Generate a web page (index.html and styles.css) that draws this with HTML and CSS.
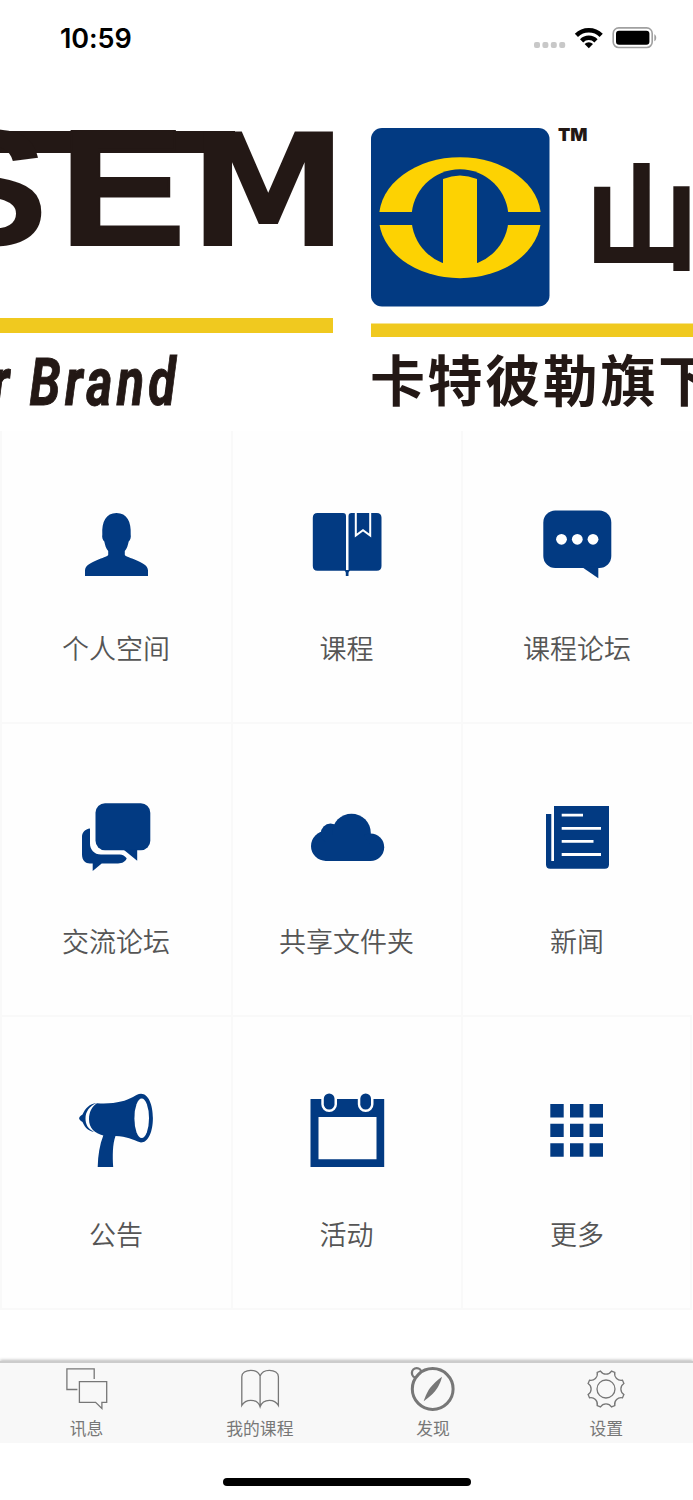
FILE: index.html
```html
<!DOCTYPE html>
<html lang="zh-CN">
<head>
<meta charset="utf-8">
<title>SEM</title>
<link rel="stylesheet" href="styles.css">
</head>
<body>
<header class="status">
  <span class="time">10:59</span>
  <svg class="status-icons" viewBox="530 20 130 36">
    <g fill="#c8c8c8"><rect x="534" y="42" width="6" height="6" rx="2"/><rect x="542.4" y="42" width="6" height="6" rx="2"/><rect x="550.8" y="42" width="6" height="6" rx="2"/><rect x="559.2" y="42" width="6" height="6" rx="2"/></g>
    <g fill="none" stroke="#000" stroke-width="4.500"><path d="M576.4 35.400a17.600 17.600 0 0 1 24.800 0"/><path d="M581.600 40.800a10.200 10.200 0 0 1 14.400 0"/></g>
    <path d="M584.600 43.900a6 6 0 0 1 8.400 0L588.800 48.200z"/>
    <rect x="613.200" y="27.900" width="39" height="19.600" rx="5.500" fill="none" stroke="#a0a0a0" stroke-width="1.600"/>
    <rect x="616" y="30.700" width="33.400" height="14" rx="3"/>
    <path d="M654.300 34.200c2.600 1 2.600 6 0 7z" fill="#a0a0a0"/>
  </svg>
</header>

<svg class="banner" viewBox="0 96 693 335">
  <g class="wordmark">
    <rect x="0" y="131" width="235" height="22"/>
    <text transform="translate(-72 245) scale(1.080 1)">S</text>
    <text class="mid" transform="translate(59 245.200) scale(1.140 .985)">E</text>
    <text class="wide" transform="translate(189 245.700) scale(1.015 1)">M</text>
  </g>
  <rect class="rule" x="0" y="318" width="333" height="15"/>
  <text class="slogan" transform="translate(-8 405) scale(.73 1)">r</text>
  <text class="slogan" transform="translate(29.500 405) scale(.75 1)" textLength="195">Brand</text>
  <rect x="371" y="128" width="178.500" height="178.500" rx="11" fill="#023a82"/>
  <ellipse cx="460" cy="217.700" rx="81" ry="60.500" fill="#fdd202"/>
  <circle cx="460" cy="217.700" r="48.500" fill="#023a82"/>
  <rect x="375" y="212" width="170" height="13" fill="#023a82"/>
  <path d="M443 179q17-7 34 0v88h-34z" fill="#fdd202"/>
  <text class="tm" x="558" y="141">TM</text>
  <text class="mountain" transform="translate(584.500 258.500) scale(.985 .97)">山</text>
  <rect class="rule" x="371" y="323.500" width="322" height="13.500"/>
  <text class="brand-cn" x="370" y="401">卡特彼勒旗下</text>
</svg>

<main class="menu">
  <a class="cell"><svg class="icon" viewBox="71 503 90 90"><path d="M85 576v-5.500c0-5 6-8 14-11.200 5-2 9.200-3 9.200-4.500V551c-2.200-2.500-3.200-6-3.900-9.500-1.700-1.500-2.500-4.500-2-7-.7-13 3.700-21.500 14.200-21.500s14.900 8.500 14.200 21.500c.5 2.500-.3 5.500-2 7-.7 3.500-1.700 7-3.900 9.500v3.800c0 1.500 4.200 2.500 9.200 4.500 8 3.200 14 6.200 14 11.200v5.500z"/></svg><span class="label">个人空间</span></a>
  <a class="cell"><svg class="icon" viewBox="301.500 503 90 90"><path d="M317 513h25.500q3 0 3 3v54.700H317q-4.700 0-4.700-4.700v-48.300q0-4.700 4.700-4.700zM351 513h25.300q4.700 0 4.700 4.700V566q0 4.700-4.700 4.700H348V516q0-3 3-3zM342 570h10q-4 .5-4 3v3h-2.700v-3q0-2.500-3.300-3z"/><path class="cut" stroke-width="2" d="M355.300 512v23.500l7.200-5.200 7.200 5.200V512"/></svg><span class="label">课程</span></a>
  <a class="cell"><svg class="icon" viewBox="532 503 90 90"><rect x="543.300" y="510.500" width="68" height="57.500" rx="12"/><path d="M583 567.800l15.300 10.500V566z"/><g fill="#fff"><circle cx="561.500" cy="539.300" r="5.400"/><circle cx="577.300" cy="539.300" r="5.400"/><circle cx="593" cy="539.300" r="5.400"/></g></svg><span class="label">课程论坛</span></a>

  <a class="cell"><svg class="icon" viewBox="71 796 90 90"><rect x="95.500" y="803.300" width="54.800" height="47" rx="9.500"/><path d="M124 850l13.200 10.800V849zM90 828.500c-5 .5-8 4-8 8.500v17.500c0 6 3.500 9 8 9h2.700v7.500l9-7.500H118c4.500 0 7.500-2 8.700-5.200-2-2.500-4-3.800-7-3.800H101c-7 0-11-5-11-11z"/></svg><span class="label">交流论坛</span></a>
  <a class="cell"><svg class="icon" viewBox="301.500 796 90 90"><circle cx="325.500" cy="846" r="15"/><circle cx="330" cy="833.300" r="9.700"/><circle cx="351" cy="833" r="19.300"/><circle cx="370" cy="847.300" r="13.700"/><path d="M325 835h38l7 10v16h-45z"/></svg><span class="label">共享文件夹</span></a>
  <a class="cell"><svg class="icon" viewBox="532 796 90 90"><path d="M554 806h55v58.500q0 4.200-4.200 4.200h-54.600q-4.200 0-4.200-4.200V814h5.300v47h2.700z"/><path class="cut" stroke-width="2.800" d="M561.700 815.200h21.300M561.700 828.300H601M561.700 841.300h31.800M561.700 854.500H601"/></svg><span class="label">新闻</span></a>

  <a class="cell"><svg class="icon" viewBox="71 1089 90 90"><path d="M97 1103.200c18 1 28-2 36-6.200 3-1.700 5-3.300 8-3.300 7.500 0 11.900 11 11.900 24.400S148.500 1142.600 141 1142.600c-9-3-14-6.100-25.500-6.600-3 8-3 20-2.300 31H97.700c.3-12 2-22.500 5.600-31.500-8.500-2.500-14.300-7-14.300-16.300 0-7.200 3-13 8-16zM96.500 1103c-7 1-11 5-14 11.500-4.500 3-4.500 4.500 0 7.500 3 6.500 6 9 11.500 9.800-6.300-3-8.500-7.500-8.500-13.500 0-6.500 4-12.300 11-15.300z"/><ellipse cx="141.700" cy="1118.200" rx="7.300" ry="19.700" fill="#fff"/></svg><span class="label">公告</span></a>
  <a class="cell"><svg class="icon" viewBox="301.500 1089 90 90"><path fill-rule="evenodd" d="M310 1099h73.700v68H310zM318 1117v42.300h58V1117z"/><g stroke="#fff" stroke-width="5" paint-order="stroke"><rect x="323.300" y="1093.500" width="10.700" height="16" rx="5.300"/><rect x="359.800" y="1093.500" width="10.700" height="16" rx="5.300"/></g></svg><span class="label">活动</span></a>
  <a class="cell last"><svg class="icon" viewBox="532 1089 90 90"><path d="M550.300 1104h13.400v13.400h-13.400zM570 1104h13.400v13.400H570zM589.600 1104H603v13.400h-13.400zM550.300 1123.700h13.400v13.400h-13.400zM570 1123.700h13.400v13.400H570zM589.600 1123.700H603v13.400h-13.400zM550.300 1143.300h13.400v13.400h-13.400zM570 1143.300h13.400v13.400H570zM589.600 1143.300H603v13.400h-13.400z"/></svg><span class="label">更多</span></a>
</main>

<nav class="tabs">
  <a class="tab"><svg class="tab-icon" viewBox="62.600 1364 48 48"><path d="M77 1389.500H66.500v-20.600h27.300V1379M79 1381.700h27.300v20.700h-4.800v6l-6.300-6H79z"/></svg><span>讯息</span></a>
  <a class="tab"><svg class="tab-icon" viewBox="235.900 1364 48 48"><path d="M260 1376c-1.500-4-5.500-5.700-9.300-5.700-5 0-9 2.500-9 6.500v28.500c2-3.300 5-5 9-5 4.300 0 8 2.500 9.300 6.500 1.300-4 5-6.500 9.300-6.500 4 0 7 1.700 9 5v-28.500c0-4-4-6.500-9-6.500-3.800 0-7.800 1.700-9.300 5.700v31"/></svg><span>我的课程</span></a>
  <a class="tab"><svg class="tab-icon" viewBox="409 1364 48 48"><circle cx="416.700" cy="1373" r="4.800" stroke-width="2.300"/><circle cx="432.700" cy="1389" r="20.400" stroke-width="3" fill="#f8f8f8"/><path d="M442 1376.800c-1 4.500-3.800 11-6.800 14.200-3 3.500-7 7.300-11.500 10.200 1.500-4.500 4-10.500 6.500-13.500 3-3.500 7.300-7.800 11.800-10.900z" fill="#777" stroke="none"/></svg><span>发现</span></a>
  <a class="tab"><svg class="tab-icon" viewBox="582.300 1364 48 48"><g transform="translate(606.300 1389)"><circle r="9"/><path d="M17.900 5.500 16.500 8.800A6.500 6.500 0 0 0 8.800 16.500L5.500 17.900A6.500 6.500 0 0 0-5.500 17.900L-8.800 16.500A6.500 6.500 0 0 0-16.500 8.800L-17.900 5.500A6.500 6.500 0 0 0-17.900-5.500L-16.500-8.800A6.500 6.500 0 0 0-8.800-16.500L-5.500-17.900A6.500 6.500 0 0 0 5.500-17.900L8.800-16.500A6.500 6.500 0 0 0 16.500-8.800L17.900-5.500A6.500 6.500 0 0 0 17.900 5.500z"/></g></svg><span>设置</span></a>
</nav>
<footer class="home"><div class="home-bar"></div></footer>
</body>
</html>
```

FILE: styles.css
```css
* { box-sizing: border-box; }
body {
  margin: 0;
  width: 693px;
  height: 1500px;
  display: flex;
  flex-direction: column;
  background: #fff;
  font-family: "Noto Sans CJK SC", sans-serif;
  overflow: hidden;
}
svg { display: block; }
.status {
  height: 96px;
  padding: 20px 33px 0 60px;
  display: flex;
  justify-content: space-between;
  align-items: flex-start;
}
.time {
  font: 600 27px/37px Inter, sans-serif;
  letter-spacing: -0.1px;
}
.status-icons { width: 130px; height: 36px; }
.banner { width: 693px; height: 335px; flex: none; }
.wordmark { fill: #231815; font: bold 167px "Liberation Sans", sans-serif; }
.wordmark .mid { stroke: #231815; stroke-width: 2px; }
.wordmark .wide { font: bold 157px "DejaVu Sans", sans-serif; }
.rule { fill: #f0c91f; }
.slogan { fill: #231815; stroke: #231815; stroke-width: 1px; font: italic bold 67px Roboto, sans-serif; }
.tm { fill: #231815; font: 900 18px Inter, sans-serif; }
.mountain { fill: #231815; stroke: #231815; stroke-width: 2px; font: bold 116px "Noto Sans CJK SC", sans-serif; }
.brand-cn { fill: #231815; font: bold 55px "Noto Sans CJK SC", sans-serif; letter-spacing: 2.6px; }
.menu {
  display: grid;
  grid-template-columns: 231px 230px 231px;
  grid-template-rows: repeat(3, 293px);
  background: #fefefe;
}
.cell {
  display: flex;
  flex-direction: column;
  align-items: center;
  padding: 72px 1px 0 0;
  border-left: 2px solid #f9f9f9;
  border-bottom: 2px solid #f9f9f9;
}
.cell.last { padding: 72px 0 0 1px; border-right: 2px solid #f9f9f9; }
.icon { width: 90px; height: 90px; fill: #023a82; }
.cut { fill: none; stroke: #fff; }
.label {
  margin-top: 35px;
  font-size: 27px;
  line-height: 40px;
  font-weight: 350;
  color: #555;
}
.tabs {
  height: 82px;
  margin-top: 51px;
  display: grid;
  grid-template-columns: repeat(4, 1fr);
  background: #f8f8f8;
  border-top: 2px solid #ccc;
  box-shadow: 0 -1px 3px #bbb;
  clip-path: inset(-5px 0 0 0);
}
.tab {
  display: flex;
  flex-direction: column;
  align-items: center;
  padding-top: 1px;
  font-size: 16.8px;
  line-height: 24px;
  color: #777;
}
.tab span { margin-top: 4px; }
.tab-icon { width: 48px; height: 48px; fill: none; stroke: #777; stroke-width: 1.3; }
.home { flex: 1; padding-top: 35px; }
.home-bar { width: 248px; height: 8px; margin: 0 auto; border-radius: 4px; background: #000; }
```
